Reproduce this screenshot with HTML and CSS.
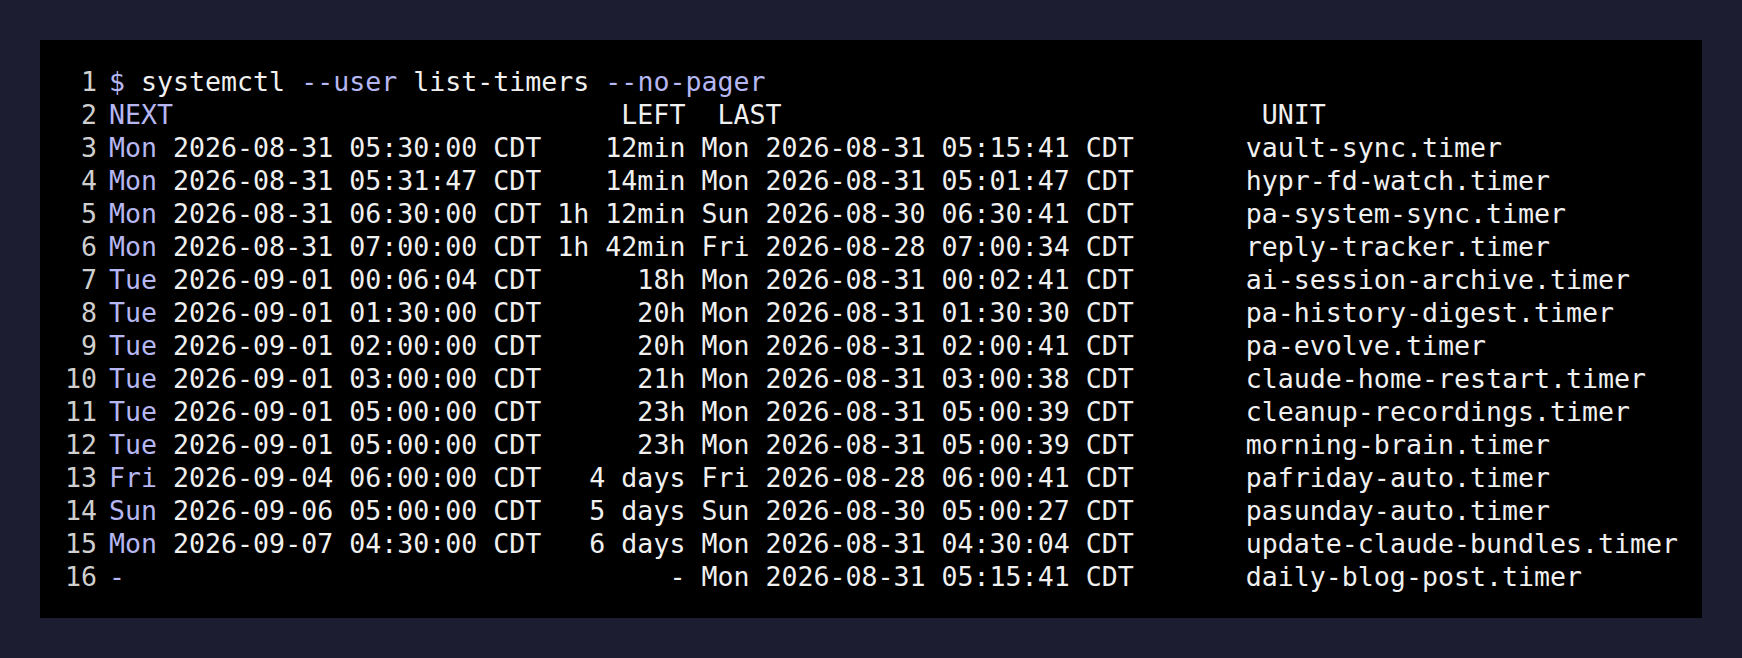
FILE: index.html
```html
<!DOCTYPE html>
<html>
<head>
<meta charset="utf-8">
<link rel="stylesheet" href="styles.css">
</head>
<body>
<div class="term">
<div class="line"><span class="ln">1</span><span class="tx"><span class="ac">$</span> systemctl <span class="ac">--user</span> list-timers <span class="ac">--no-pager</span></span></div>
<div class="line"><span class="ln">2</span><span class="tx"><span class="ac">NEXT</span>                            LEFT  LAST                              UNIT</span></div>
<div class="line"><span class="ln">3</span><span class="tx"><span class="ac">Mon</span> 2026-08-31 05:30:00 CDT    12min Mon 2026-08-31 05:15:41 CDT       vault-sync.timer</span></div>
<div class="line"><span class="ln">4</span><span class="tx"><span class="ac">Mon</span> 2026-08-31 05:31:47 CDT    14min Mon 2026-08-31 05:01:47 CDT       hypr-fd-watch.timer</span></div>
<div class="line"><span class="ln">5</span><span class="tx"><span class="ac">Mon</span> 2026-08-31 06:30:00 CDT 1h 12min Sun 2026-08-30 06:30:41 CDT       pa-system-sync.timer</span></div>
<div class="line"><span class="ln">6</span><span class="tx"><span class="ac">Mon</span> 2026-08-31 07:00:00 CDT 1h 42min Fri 2026-08-28 07:00:34 CDT       reply-tracker.timer</span></div>
<div class="line"><span class="ln">7</span><span class="tx"><span class="ac">Tue</span> 2026-09-01 00:06:04 CDT      18h Mon 2026-08-31 00:02:41 CDT       ai-session-archive.timer</span></div>
<div class="line"><span class="ln">8</span><span class="tx"><span class="ac">Tue</span> 2026-09-01 01:30:00 CDT      20h Mon 2026-08-31 01:30:30 CDT       pa-history-digest.timer</span></div>
<div class="line"><span class="ln">9</span><span class="tx"><span class="ac">Tue</span> 2026-09-01 02:00:00 CDT      20h Mon 2026-08-31 02:00:41 CDT       pa-evolve.timer</span></div>
<div class="line"><span class="ln">10</span><span class="tx"><span class="ac">Tue</span> 2026-09-01 03:00:00 CDT      21h Mon 2026-08-31 03:00:38 CDT       claude-home-restart.timer</span></div>
<div class="line"><span class="ln">11</span><span class="tx"><span class="ac">Tue</span> 2026-09-01 05:00:00 CDT      23h Mon 2026-08-31 05:00:39 CDT       cleanup-recordings.timer</span></div>
<div class="line"><span class="ln">12</span><span class="tx"><span class="ac">Tue</span> 2026-09-01 05:00:00 CDT      23h Mon 2026-08-31 05:00:39 CDT       morning-brain.timer</span></div>
<div class="line"><span class="ln">13</span><span class="tx"><span class="ac">Fri</span> 2026-09-04 06:00:00 CDT   4 days Fri 2026-08-28 06:00:41 CDT       pafriday-auto.timer</span></div>
<div class="line"><span class="ln">14</span><span class="tx"><span class="ac">Sun</span> 2026-09-06 05:00:00 CDT   5 days Sun 2026-08-30 05:00:27 CDT       pasunday-auto.timer</span></div>
<div class="line"><span class="ln">15</span><span class="tx"><span class="ac">Mon</span> 2026-09-07 04:30:00 CDT   6 days Mon 2026-08-31 04:30:04 CDT       update-claude-bundles.timer</span></div>
<div class="line"><span class="ln">16</span><span class="tx"><span class="ac">-</span>                                  - Mon 2026-08-31 05:15:41 CDT       daily-blog-post.timer</span></div>
</div>
</body>
</html>
```

FILE: styles.css
```css
html, body {
  margin: 0;
  padding: 0;
}
body {
  background: #1c1d30;
  padding: 40px;
  width: 1662px;
}
.term {
  background: #000000;
  padding: 25px 24px 25px 25px;
  font-family: "DejaVu Sans Mono", monospace;
  font-size: 26.6px;
  line-height: 33px;
  color: #f0f0f0;
}
.line {
  display: flex;
  gap: 12px;
  white-space: pre;
  height: 33px;
}
.ln {
  width: 32px;
  text-align: right;
  color: #cfcfcf;
  flex: none;
}
.ac {
  color: #b6b7f2;
}
```
